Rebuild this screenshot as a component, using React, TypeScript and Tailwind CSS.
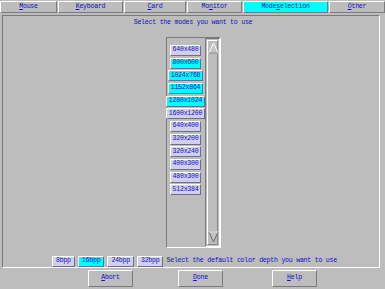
import React from 'react';

const tabs = [
  { pre: '', u: 'M', post: 'ouse', w: 'w-[57px]' },
  { pre: '', u: 'K', post: 'eyboard', w: 'w-[65px]' },
  { pre: '', u: 'C', post: 'ard', w: 'w-[62px]' },
  { pre: 'Mo', u: 'n', post: 'itor', w: 'w-[55px]' },
  { pre: 'Mode', u: 's', post: 'election', w: 'w-[85px]', active: true },
  { pre: '', u: 'O', post: 'ther', w: 'w-[56px]' },
];

const modes = [
  { label: '640x480', on: false },
  { label: '800x600', on: true },
  { label: '1024x768', on: true },
  { label: '1152x864', on: true },
  { label: '1280x1024', on: true },
  { label: '1600x1200', on: false },
  { label: '640x400', on: false },
  { label: '320x200', on: false },
  { label: '320x240', on: false },
  { label: '400x300', on: false },
  { label: '480x300', on: false },
  { label: '512x384', on: false },
];

const depths = [
  { label: '8bpp', on: false },
  { label: '16bpp', on: true },
  { label: '24bpp', on: false },
  { label: '32bpp', on: false },
];

const App: React.FC = () => {
  return (
    <div
      className="w-[385px] h-[289px] bg-[#bdbdbd] flex flex-col text-[#1010c4] text-[6.6px] tracking-[-0.25px] leading-none overflow-hidden"
      style={{ fontFamily: '"Liberation Mono", "DejaVu Sans Mono", monospace' }}
    >
      {/* Tab bar */}
      <div className="flex gap-[1px] pt-[1px] h-[14px]">
        {tabs.map((t) => (
          <div
            key={t.post}
            className={`${t.w} h-[12px] flex items-center justify-center border border-t-white border-l-white border-b-[#7a7a7a] border-r-[#7a7a7a] ${t.active ? 'bg-[#00ffff]' : 'bg-[#bdbdbd]'}`}
          >
            <span>
              {t.pre}
              <span className="underline">{t.u}</span>
              {t.post}
            </span>
          </div>
        ))}
      </div>

      {/* Main panel */}
      <div className="mx-[2px] mr-[5px] mt-[1px] h-[253px] border border-t-[#7a7a7a] border-l-[#7a7a7a] border-b-white border-r-white flex flex-col items-center">
        <div className="mt-[3px] ml-[4px] h-[8px] flex items-center">Select the modes you want to use</div>

        {/* List box */}
        <div className="mt-[10px] ml-[4px] w-[55px] h-[213px] flex border border-t-[#7a7a7a] border-l-[#7a7a7a] border-b-white border-r-white">
          <div className="w-[38px] flex flex-col items-center pt-[7px] gap-[1.7px]">
            {modes.map((m) => (
              <div
                key={m.label}
                className={`h-[11px] px-[2px] flex items-center border border-t-white border-l-white border-b-[#6e6e8a] border-r-[#6e6e8a] ${m.on ? 'bg-[#00ffff]' : 'bg-[#d0d0e8]'}`}
              >
                {m.label}
              </div>
            ))}
          </div>
          {/* Scrollbar */}
          <div className="w-[15px] flex flex-col border border-t-[#7a7a7a] border-l-[#7a7a7a] border-b-white border-r-white">
            <div className="flex-1 flex flex-col border border-t-white border-l-white border-b-[#8a8a8a] border-r-[#8a8a8a] mx-[1px] my-[1px]">
              <svg width="11" height="12" viewBox="0 0 11 12" className="mt-[1px]">
                <path d="M5.5 1 L10 11 L1 11 Z" fill="#c4c4c4" stroke="#ffffff" strokeWidth="1" />
                <path d="M10 11 L1 11" stroke="#6e6e6e" strokeWidth="1" />
              </svg>
              <div className="flex-1" />
              <svg width="11" height="12" viewBox="0 0 11 12" className="mb-[1px]">
                <path d="M1 1 L10 1 L5.5 11 Z" fill="#c4c4c4" stroke="#6e6e6e" strokeWidth="1" />
                <path d="M1 1 L10 1" stroke="#ffffff" strokeWidth="1" />
              </svg>
            </div>
          </div>
        </div>

        {/* Color depth row */}
        <div className="mt-[8px] self-start ml-[49px] flex items-center gap-[3px]">
          {depths.map((d) => (
            <div
              key={d.label}
              className={`h-[11px] px-[3px] flex items-center border border-t-white border-l-white border-b-[#6e6e8a] border-r-[#6e6e8a] ${d.on ? 'bg-[#00ffff]' : 'bg-[#d0d0e8]'}`}
            >
              {d.label}
            </div>
          ))}
          <span>Select the default color depth you want to use</span>
        </div>
      </div>

      {/* Bottom buttons */}
      <div className="flex items-center mt-[2px] pl-[88px]">
        <div className="w-[45px] h-[17px] flex items-center justify-center border border-t-white border-l-white border-b-[#7a7a7a] border-r-[#7a7a7a]">
          <span><span className="underline">A</span>bort</span>
        </div>
        <div className="ml-[45px] w-[45px] h-[17px] flex items-center justify-center border border-t-white border-l-white border-b-[#7a7a7a] border-r-[#7a7a7a]">
          <span><span className="underline">D</span>one</span>
        </div>
        <div className="ml-[49px] w-[45px] h-[17px] flex items-center justify-center border border-t-white border-l-white border-b-[#7a7a7a] border-r-[#7a7a7a]">
          <span><span className="underline">H</span>elp</span>
        </div>
      </div>
    </div>
  );
};

export default App;
